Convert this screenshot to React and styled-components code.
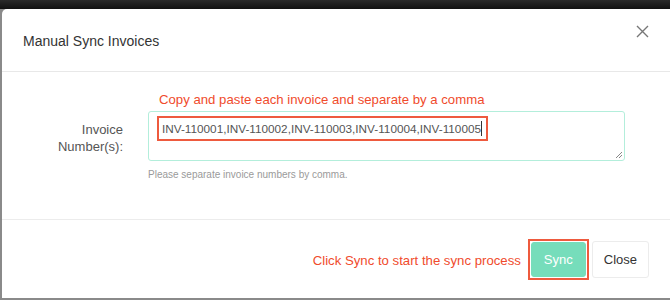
import styled, { createGlobalStyle } from "styled-components";

const GlobalStyle = createGlobalStyle`
    html, body {
        margin: 0;
        padding: 0;
        height: 300px;
        overflow: hidden;
        background: linear-gradient(180deg, #2a2a2a 0, #111 9px, #8a8a8a 9px);
        font-family: "Liberation Sans", Arial, sans-serif;
    }
`;

const Backdrop = styled.div`
    padding: 9px 0 2px 2px;
    height: 300px;
    box-sizing: border-box;
`;

const Modal = styled.div`
    background: #fff;
    height: 289px;
    border-radius: 5px 0 0 0;
    display: flex;
    flex-direction: column;
`;

const Header = styled.div`
    height: 63px;
    box-sizing: border-box;
    display: flex;
    align-items: center;
    justify-content: space-between;
    padding: 0 20px 0 21px;
    border-bottom: 1px solid #e8e8e8;
`;

const Title = styled.div`
    font-size: 14px;
    color: #333;
    margin-top: 1px;
`;

const CloseIcon = styled.button`
    border: none;
    background: none;
    padding: 0;
    margin-top: -16px;
    width: 14px;
    height: 14px;
    cursor: pointer;
    display: flex;
`;

const Body = styled.div`
    height: 148px;
    box-sizing: border-box;
    padding: 20px 0 0 0;
    border-bottom: 1px solid #ececec;
`;

const Hint = styled.div`
    color: #f04b2c;
    font-size: 13.2px;
    margin-left: 157px;
    height: 19px;
`;

const Row = styled.div`
    display: flex;
    align-items: flex-start;
`;

const Label = styled.div`
    width: 121px;
    text-align: right;
    font-size: 13px;
    line-height: 17px;
    color: #555;
    padding-top: 10px;
`;

const Field = styled.div`
    margin-left: 25px;
    width: 477px;
`;

const Area = styled.div`
    height: 50px;
    box-sizing: border-box;
    border: 1.5px solid #b3eedb;
    border-radius: 3px;
    padding: 4px 8px;
    position: relative;
`;

const Marked = styled.span`
    display: inline-block;
    border: 2px solid #ee5a3e;
    padding: 3px 4px 3px 3px;
    font-size: 11.75px;
    color: #555;
    line-height: 15px;
`;

const Caret = styled.span`
    display: inline-block;
    width: 1px;
    height: 15px;
    background: #333;
    vertical-align: top;
`;

const Grip = styled.svg`
    position: absolute;
    right: 1px;
    bottom: 1px;
`;

const HelpText = styled.div`
    font-size: 10px;
    color: #9a9a9a;
    margin-top: 8px;
`;

const Footer = styled.div`
    flex: 1;
    display: flex;
    align-items: center;
    justify-content: flex-end;
    padding: 0 21px 0 0;
`;

const FooterHint = styled.div`
    color: #f04b2c;
    font-size: 13.2px;
    margin-right: 7px;
    margin-top: 2px;
`;

const Outline = styled.div`
    border: 2px solid #ee5a3e;
    padding: 1px;
    display: flex;
`;

const Button = styled.button`
    font-family: "Liberation Sans", Arial, sans-serif;
    font-size: 13px;
    height: ${p => (p.$primary ? "35px" : "37px")};
    padding: 0 ${p => (p.$primary ? "12px" : "11px")};
    border-radius: 3px;
    border: 1px solid ${p => (p.$primary ? "#76ddbb" : "#ececec")};
    background: ${p => (p.$primary ? "#76ddbb" : "#fff")};
    color: ${p => (p.$primary ? "#fff" : "#333")};
    margin-left: ${p => (p.$primary ? "0" : "3px")};
    cursor: pointer;
`;

const App = () => {
    return (
        <>
            <GlobalStyle />
            <Backdrop>
                <Modal>
                    <Header>
                        <Title>Manual Sync Invoices</Title>
                        <CloseIcon aria-label="close">
                            <svg width="13" height="13" viewBox="0 0 13 13">
                                <path d="M1 1L12 12M12 1L1 12" stroke="#777" strokeWidth="1.4" />
                            </svg>
                        </CloseIcon>
                    </Header>

                    <Body>
                        <Hint>Copy and paste each invoice and separate by a comma</Hint>
                        <Row>
                            <Label>
                                Invoice
                                <br />
                                Number(s):
                            </Label>
                            <Field>
                                <Area>
                                    <Marked>
                                        INV-110001,INV-110002,INV-110003,INV-110004,INV-110005
                                        <Caret />
                                    </Marked>
                                    <Grip width="8" height="8" viewBox="0 0 8 8">
                                        <path d="M7 1L1 7M7 4L4 7" stroke="#888" strokeWidth="1" />
                                    </Grip>
                                </Area>
                                <HelpText>Please separate invoice numbers by comma.</HelpText>
                            </Field>
                        </Row>
                    </Body>

                    <Footer>
                        <FooterHint>Click Sync to start the sync process</FooterHint>
                        <Outline>
                            <Button $primary>Sync</Button>
                        </Outline>
                        <Button>Close</Button>
                    </Footer>
                </Modal>
            </Backdrop>
        </>
    );
};

export default App;
